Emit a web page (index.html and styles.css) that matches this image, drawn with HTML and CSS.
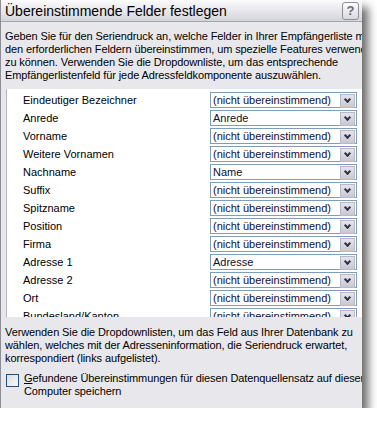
FILE: index.html
```html
<!DOCTYPE html>
<html lang="de">
  <head>
    <meta charset="UTF-8" />
    <title>Übereinstimmende Felder festlegen</title>
    <link rel="stylesheet" href="styles.css">
  </head>
  <body>
    <div class="dialog">
      <div class="titlebar">
        <span class="title">Übereinstimmende Felder festlegen</span>
        <span class="help">?</span>
      </div>
      <div class="content">
        <p class="text intro">
          <span>Geben Sie für den Seriendruck an, welche Felder in Ihrer Empfängerliste mit</span>
          <span>den erforderlichen Feldern übereinstimmen, um spezielle Features verwenden</span>
          <span>zu können. Verwenden Sie die Dropdownliste, um das entsprechende</span>
          <span>Empfängerlistenfeld für jede Adressfeldkomponente auszuwählen.</span>
        </p>

        <div class="fields">
          <div class="row"><span class="label">Eindeutiger Bezeichner</span><span class="select">(nicht übereinstimmend)<i class="arrow"></i></span></div>
          <div class="row"><span class="label">Anrede</span><span class="select">Anrede<i class="arrow"></i></span></div>
          <div class="row"><span class="label">Vorname</span><span class="select">(nicht übereinstimmend)<i class="arrow"></i></span></div>
          <div class="row"><span class="label">Weitere Vornamen</span><span class="select">(nicht übereinstimmend)<i class="arrow"></i></span></div>
          <div class="row"><span class="label">Nachname</span><span class="select">Name<i class="arrow"></i></span></div>
          <div class="row"><span class="label">Suffix</span><span class="select">(nicht übereinstimmend)<i class="arrow"></i></span></div>
          <div class="row"><span class="label">Spitzname</span><span class="select">(nicht übereinstimmend)<i class="arrow"></i></span></div>
          <div class="row"><span class="label">Position</span><span class="select">(nicht übereinstimmend)<i class="arrow"></i></span></div>
          <div class="row"><span class="label">Firma</span><span class="select">(nicht übereinstimmend)<i class="arrow"></i></span></div>
          <div class="row"><span class="label">Adresse 1</span><span class="select">Adresse<i class="arrow"></i></span></div>
          <div class="row"><span class="label">Adresse 2</span><span class="select">(nicht übereinstimmend)<i class="arrow"></i></span></div>
          <div class="row"><span class="label">Ort</span><span class="select">(nicht übereinstimmend)<i class="arrow"></i></span></div>
          <div class="row"><span class="label">Bundesland/Kanton</span><span class="select">(nicht übereinstimmend)<i class="arrow"></i></span></div>
        </div>

        <p class="text note">
          <span>Verwenden Sie die Dropdownlisten, um das Feld aus Ihrer Datenbank zu</span>
          <span>wählen, welches mit der Adresseninformation, die Seriendruck erwartet,</span>
          <span>korrespondiert (links aufgelistet).</span>
        </p>

        <div class="save">
          <span class="check"></span>
          <p class="text">
            <span><u>G</u>efundene Übereinstimmungen für diesen Datenquellensatz auf diesem</span>
            <span>Computer speichern</span>
          </p>
        </div>
      </div>
    </div>
  </body>
</html>
```

FILE: styles.css
```css
body {
  margin: 0;
  background: #fff;
  font-family: "Liberation Sans", Arial, sans-serif;
  font-size: 11px;
  color: #000;
}

.dialog {
  width: 362px;
  height: 408px;
  overflow: hidden;
  background-color: #e8e8ec;
  border-left: 1px solid #8c8c94;
  box-sizing: border-box;
  box-shadow: 6px 7px 9px rgba(0, 0, 0, 0.6);
}

.titlebar {
  height: 21px;
  display: flex;
  align-items: center;
  justify-content: space-between;
  padding: 0 3px 0 4px;
  background: linear-gradient(#fbfbfc, #e4e4ea 60%, #d3d3db);
  border-bottom: 1px solid #a4a4ac;
}

.title {
  font-size: 14px;
  letter-spacing: 0;
}

.help {
  width: 15px;
  height: 16px;
  border: 1px solid #8e8e9a;
  border-radius: 3px;
  background: linear-gradient(#fdfdfd, #d8d8e0);
  color: #6a6a74;
  font-size: 13px;
  font-weight: bold;
  text-align: center;
  line-height: 16px;
}

.content {
  padding: 0 0 0 4px;
}

.text {
  margin: 0;
  line-height: 13px;
  white-space: nowrap;
  letter-spacing: -0.1px;
}

.text span {
  display: block;
}

.intro {
  padding-top: 8px;
}

.fields {
  margin: 7px 0 0 1px;
  height: 228px;
  overflow: hidden;
  background: #fff;
  border-left: 1px solid #b4b4bc;
  padding-top: 2px;
  box-sizing: border-box;
}

.row {
  display: flex;
  align-items: center;
  height: 18px;
}

.label {
  width: 187px;
  padding-left: 16px;
  flex-shrink: 0;
}

.select {
  position: relative;
  width: 147px;
  height: 16px;
  box-sizing: border-box;
  border: 1px solid #7f9db9;
  padding-left: 2px;
  line-height: 14px;
  color: #101030;
  flex-shrink: 0;
}

.arrow {
  position: absolute;
  top: 1px;
  right: 1px;
  width: 13px;
  height: 12px;
  border: 1px solid #b8b8c8;
  background: linear-gradient(#e4e4ec, #c8c8d4);
}

.arrow::after {
  content: "";
  position: absolute;
  left: 4px;
  top: 2px;
  width: 3px;
  height: 3px;
  border-right: 2px solid #303040;
  border-bottom: 2px solid #303040;
  transform: rotate(45deg);
}

.note {
  margin-top: 9px;
}

.save {
  display: flex;
  align-items: flex-start;
  margin-top: 7px;
}

.check {
  width: 11px;
  height: 11px;
  margin: 2px 5px 0 1px;
  border: 1px solid #1c5180;
  background: linear-gradient(135deg, #dcdce0, #f8f8f8);
  flex-shrink: 0;
}
```
